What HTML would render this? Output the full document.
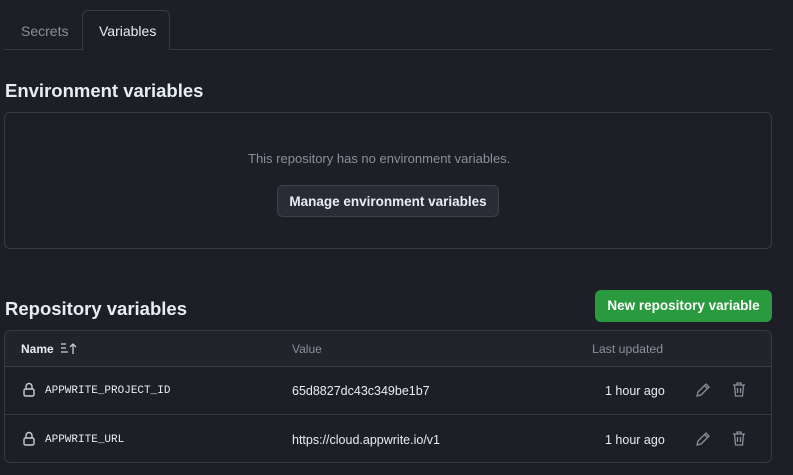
<!DOCTYPE html>
<html><head><style>
body{margin:0;width:793px;height:475px;background:#1e1e27;font-family:"Liberation Sans",sans-serif;color:#e6edf3;position:relative;overflow:hidden}
.a{position:absolute}
.tabline{left:4px;top:49px;width:768px;height:1px;background:#3a3a44}
.tab{left:82px;top:10px;width:88px;height:40px;border:1px solid #3a3a44;border-bottom:none;border-radius:6px 6px 0 0;background:#1e1e27;box-sizing:border-box}
h2{margin:0;font-size:18.5px;font-weight:bold;color:#e6edf3;position:absolute}
.box{border:1px solid #3a3a44;border-radius:6px;box-sizing:border-box}
.btn{background:#2a2b34;border:1px solid #40414b;border-radius:6px;box-sizing:border-box;font-size:13.5px;font-weight:bold;text-align:center;color:#e6edf3}
.g{background:#2a9a3f;border-radius:6px;color:#fff;font-size:13.5px;font-weight:bold;text-align:center}
.mono{font-family:"Liberation Mono",monospace;font-size:11px;color:#e6edf3}
.s{font-size:12.5px;color:#e6edf3}
.m{font-size:12.5px;color:#8b8f98}
</style></head><body>
<div class="a tabline"></div>
<div class="a tab"></div>
<div class="a" style="left:21px;top:23px;font-size:14px;color:#8b8f98">Secrets</div>
<div class="a" style="left:99px;top:23px;font-size:14px;color:#e6edf3">Variables</div>
<h2 style="left:5px;top:80px">Environment variables</h2>
<div class="a box" style="left:4px;top:112px;width:768px;height:137px"></div>
<div class="a" style="left:248px;top:151px;font-size:13px;color:#8b8f98">This repository has no environment variables.</div>
<div class="a btn" style="left:277px;top:185px;width:222px;height:32px;line-height:31px">Manage environment variables</div>
<h2 style="left:5px;top:298px">Repository variables</h2>
<div class="a g" style="left:595px;top:290px;width:177px;height:32px;line-height:32px">New repository variable</div>
<div class="a box" style="left:4px;top:330px;width:768px;height:133px"></div>
<div class="a" style="left:5px;top:331px;width:766px;height:35px;background:#23232c;border-radius:6px 6px 0 0;border-bottom:1px solid #3a3a44"></div>
<div class="a" style="left:5px;top:414px;width:766px;height:1px;background:#3a3a44"></div>
<div class="a" style="left:21px;top:342px;font-size:12px;font-weight:bold">Name</div>
<svg class="a" style="left:60px;top:342px" width="20" height="14" viewBox="0 0 20 14" fill="none" stroke="#c9ced6" stroke-width="1.3"><path d="M1 2h5M1 6h5M1 10h7M13 12V2M10 5l3-3 3 3"/></svg>
<div class="a m" style="left:292px;top:342px;font-size:12px">Value</div>
<div class="a m" style="left:592px;top:342px;font-size:12.3px">Last updated</div>
<svg class="a" style="left:23px;top:382px" width="12" height="15" viewBox="0 0 12 15" fill="none" stroke="#c9ced6" stroke-width="1.4"><path d="M3 7V4.5a3 3 0 0 1 6 0V7"/><rect x="1" y="7" width="10" height="7" rx="1.5"/></svg>
<svg class="a" style="left:23px;top:431px" width="12" height="15" viewBox="0 0 12 15" fill="none" stroke="#c9ced6" stroke-width="1.4"><path d="M3 7V4.5a3 3 0 0 1 6 0V7"/><rect x="1" y="7" width="10" height="7" rx="1.5"/></svg>
<div class="a mono" style="left:45px;top:385px">APPWRITE_PROJECT_ID</div>
<div class="a mono" style="left:45px;top:434px">APPWRITE_URL</div>
<div class="a s" style="left:292px;top:384px">65d8827dc43c349be1b7</div>
<div class="a s" style="left:292px;top:433px">https://cloud.appwrite.io/v1</div>
<div class="a s" style="left:605px;top:384px">1 hour ago</div>
<div class="a s" style="left:605px;top:433px">1 hour ago</div>
<svg class="a" style="left:695px;top:382px" width="16" height="16" viewBox="0 0 16 16" fill="none" stroke="#8b8f98" stroke-width="1.3"><path d="M2 14l1-4 8-8 3 3-8 8z M9.5 3.5l3 3"/></svg>
<svg class="a" style="left:695px;top:431px" width="16" height="16" viewBox="0 0 16 16" fill="none" stroke="#8b8f98" stroke-width="1.3"><path d="M2 14l1-4 8-8 3 3-8 8z M9.5 3.5l3 3"/></svg>
<svg class="a" style="left:731px;top:381px" width="16" height="17" viewBox="0 0 16 17" fill="none" stroke="#8b8f98" stroke-width="1.3"><path d="M2 4h12M6 4V2h4v2M3.5 4l1 11h7l1-11M6.5 7v5M9.5 7v5"/></svg>
<svg class="a" style="left:731px;top:430px" width="16" height="17" viewBox="0 0 16 17" fill="none" stroke="#8b8f98" stroke-width="1.3"><path d="M2 4h12M6 4V2h4v2M3.5 4l1 11h7l1-11M6.5 7v5M9.5 7v5"/></svg>
</body></html>
